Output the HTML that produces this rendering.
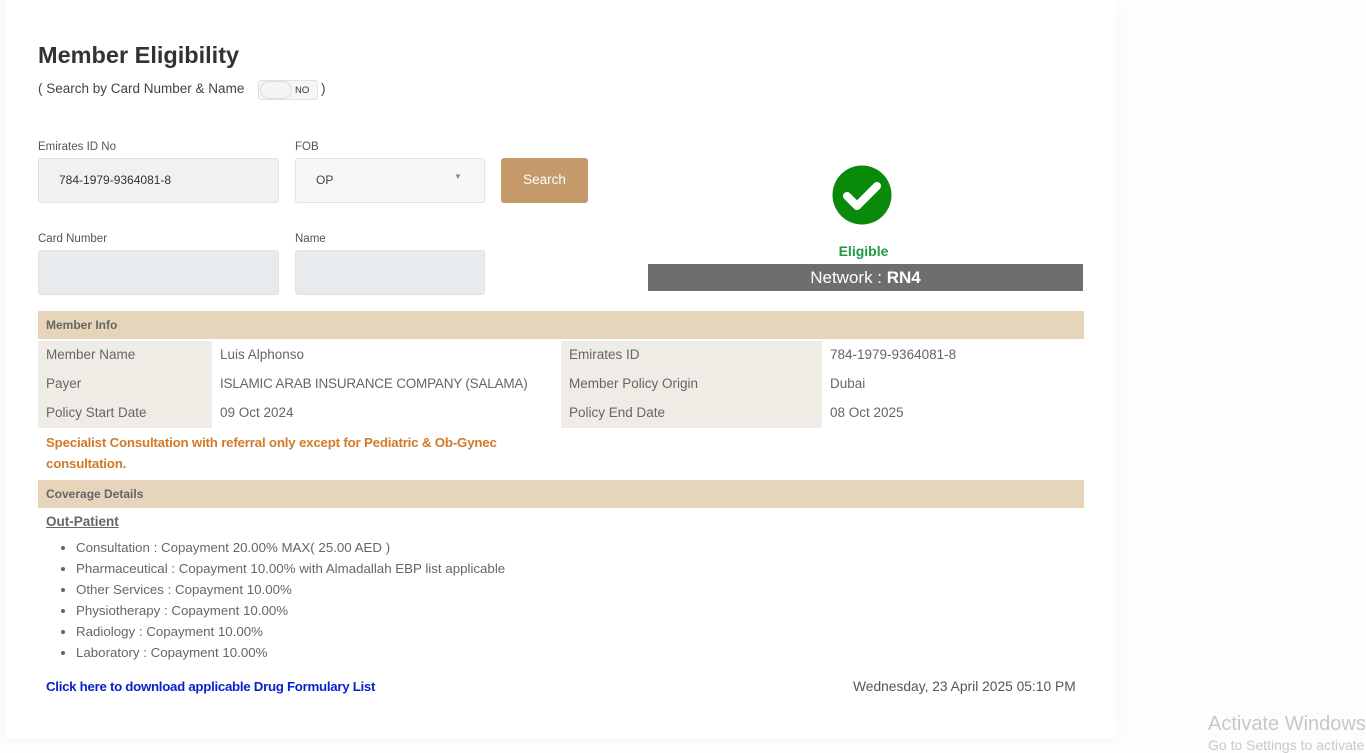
<!DOCTYPE html>
<html><head><style>
body{margin:0;width:1366px;height:748px;background:#fdfdfd;font-family:"Liberation Sans",sans-serif;position:relative;overflow:hidden;color:#555}
.a{position:absolute}
.card{left:6px;top:0;width:1110px;height:738px;background:#fff;box-shadow:0 0 14px rgba(0,0,0,.035)}
.lbl{font-size:11.5px;color:#555}
.inp{border-radius:3px;border:1px solid #e2e2e2;height:45px;box-sizing:border-box}
.t{font-size:13.5px;color:#666}
.hdr{left:38px;width:1046px;height:28px;background:#e6d5bb;font-size:12px;font-weight:bold;color:#666;line-height:28px;text-indent:8px}
.cell{background:#efebe5}
li{margin:0;line-height:21px}
</style></head><body>
<div class="a card"></div>
<div class="a" style="left:38px;top:42px;font-size:23.5px;font-weight:bold;color:#333">Member Eligibility</div>
<div class="a" style="left:38px;top:81px;font-size:13.5px;color:#444">( Search by Card Number &amp; Name</div>
<div class="a" style="left:258px;top:80px;width:60px;height:20px;border:1px solid #e2e2e2;background:#f6f6f6;box-sizing:border-box;border-radius:3px"></div>
<div class="a" style="left:260px;top:81px;width:30px;height:16px;border:1px solid #ddd;background:#f4f4f4;border-radius:9px"></div>
<div class="a" style="left:295px;top:85px;font-size:9.5px;color:#333">NO</div>
<div class="a" style="left:321px;top:81px;font-size:13.5px;color:#444">)</div>

<div class="a lbl" style="left:38px;top:141px">Emirates ID No</div>
<div class="a inp" style="left:38px;top:158px;width:241px;background:#f1f1f1"></div>
<div class="a" style="left:59px;top:173px;font-size:12px;color:#333">784-1979-9364081-8</div>
<div class="a lbl" style="left:295px;top:141px">FOB</div>
<div class="a inp" style="left:295px;top:158px;width:190px;background:#f7f7f7"></div>
<div class="a" style="left:316px;top:173px;font-size:12px;color:#444">OP</div>
<div class="a" style="left:454px;top:172px;font-size:8px;color:#888">&#9660;</div>
<div class="a" style="left:501px;top:158px;width:87px;height:45px;background:#c59a6a;border-radius:3px;color:#fff;font-size:13.5px;text-align:center;line-height:43px">Search</div>

<div class="a lbl" style="left:38px;top:233px">Card Number</div>
<div class="a inp" style="left:38px;top:250px;width:241px;background:#e8ebee"></div>
<div class="a lbl" style="left:295px;top:233px">Name</div>
<div class="a inp" style="left:295px;top:250px;width:190px;background:#e8ebee"></div>

<svg class="a" style="left:832px;top:165px" width="60" height="60" viewBox="0 0 60 60"><circle cx="30" cy="30" r="29.5" fill="#0a8a0a"/><path d="M15 31 L25 41 L45 21" stroke="#fff" stroke-width="8" fill="none" stroke-linecap="round" stroke-linejoin="round"/></svg>
<div class="a" style="left:646px;top:243px;width:435px;text-align:center;font-size:14px;font-weight:bold;color:#1f9a45">Eligible</div>
<div class="a" style="left:648px;top:264px;width:435px;height:27px;background:#6e6e6e;color:#fff;text-align:center;font-size:17px;line-height:27px">Network : <b>RN4</b></div>

<div class="a hdr" style="top:311px">Member Info</div>
<div class="a cell" style="left:38px;top:341px;width:174px;height:87px"></div>
<div class="a cell" style="left:561px;top:341px;width:261px;height:87px"></div>
<div class="a t" style="left:46px;top:347px">Member Name</div>
<div class="a t" style="left:220px;top:347px">Luis Alphonso</div>
<div class="a t" style="left:569px;top:347px">Emirates ID</div>
<div class="a t" style="left:830px;top:347px">784-1979-9364081-8</div>
<div class="a t" style="left:46px;top:376px">Payer</div>
<div class="a t" style="left:220px;top:376px;letter-spacing:-0.2px">ISLAMIC ARAB INSURANCE COMPANY (SALAMA)</div>
<div class="a t" style="left:569px;top:376px">Member Policy Origin</div>
<div class="a t" style="left:830px;top:376px">Dubai</div>
<div class="a t" style="left:46px;top:405px">Policy Start Date</div>
<div class="a t" style="left:220px;top:405px">09 Oct 2024</div>
<div class="a t" style="left:569px;top:405px">Policy End Date</div>
<div class="a t" style="left:830px;top:405px">08 Oct 2025</div>
<div class="a" style="left:46px;top:432px;width:480px;font-size:13.3px;font-weight:bold;color:#d07a2a;line-height:21px;letter-spacing:-0.2px">Specialist Consultation with referral only except for Pediatric &amp; Ob-Gynec consultation.</div>

<div class="a hdr" style="top:480px">Coverage Details</div>
<div class="a" style="left:46px;top:514px;font-size:13.5px;font-weight:bold;color:#666;text-decoration:underline">Out-Patient</div>
<ul class="a" style="left:36px;top:537px;margin:0;padding-left:40px;font-size:13.3px;color:#666">
<li>Consultation : Copayment 20.00% MAX( 25.00 AED )</li>
<li>Pharmaceutical : Copayment 10.00% with Almadallah EBP list applicable</li>
<li>Other Services : Copayment 10.00%</li>
<li>Physiotherapy : Copayment 10.00%</li>
<li>Radiology : Copayment 10.00%</li>
<li>Laboratory : Copayment 10.00%</li>
</ul>
<div class="a" style="left:46px;top:679px;font-size:13.3px;font-weight:bold;color:#0a1fcc;letter-spacing:-0.3px">Click here to download applicable Drug Formulary List</div>
<div class="a" style="left:853px;top:679px;font-size:13.8px;color:#555">Wednesday, 23 April 2025 05:10 PM</div>

<div class="a" style="left:1208px;top:713px;font-size:20px;color:#c8c8c8">Activate Windows</div>
<div class="a" style="left:1208px;top:737px;font-size:14px;color:#c8c8c8">Go to Settings to activate</div>
</body></html>
